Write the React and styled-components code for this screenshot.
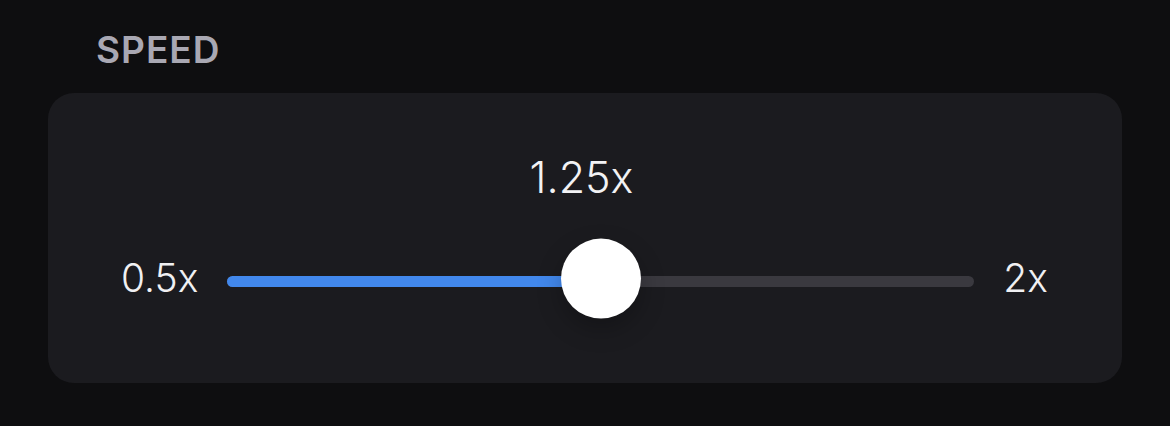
import React from "react";
import styled, { createGlobalStyle } from "styled-components";

const GlobalStyle = createGlobalStyle`
  html, body {
    margin: 0;
    padding: 0;
    background: #0e0e10;
    font-family: "Inter", "Liberation Sans", sans-serif;
  }
`;

const MIN = 0.5;
const MAX = 2;

const SpeedSetting = ({ value }) => {
  const pct = ((value - MIN) / (MAX - MIN)) * 100;
  return (
    <Section>
      <Label>SPEED</Label>
      <Card>
        <Value>{value}x</Value>
        <Row>
          <EndLabel>{MIN}x</EndLabel>
          <Track>
            <Fill style={{ width: `${pct}%` }} />
            <Thumb style={{ left: `${pct}%` }} />
          </Track>
          <EndLabel>{MAX}x</EndLabel>
        </Row>
      </Card>
    </Section>
  );
};

const App = () => (
  <>
    <GlobalStyle />
    <Page>
      <SpeedSetting value={1.25} />
    </Page>
  </>
);

export default App;

const Page = styled.div`
  width: 1170px;
  height: 426px;
  background: #0e0e10;
  padding: 28px 48px 0;
  box-sizing: border-box;
`;

const Section = styled.div`
  display: flex;
  flex-direction: column;
`;

const Label = styled.div`
  margin-left: 48px;
  color: #a9a8b3;
  font-size: 37px;
  font-weight: 600;
  letter-spacing: 1px;
  line-height: 44px;
  height: 44px;
  margin-bottom: 21px;
`;

const Card = styled.div`
  height: 290px;
  background: #1b1b1f;
  border-radius: 26px;
  display: flex;
  flex-direction: column;
  align-items: center;
  padding: 0 74px 0 73px;
  box-sizing: border-box;
`;

const Value = styled.div`
  margin-top: 60px;
  color: #f2f2f4;
  font-size: 43px;
  font-weight: 300;
  line-height: 48px;
  margin-left: -6px;
`;

const Row = styled.div`
  margin-top: 55px;
  width: 100%;
  display: flex;
  align-items: center;
  gap: 29px;
`;

const EndLabel = styled.div`
  color: #f0f0f2;
  font-size: 39px;
  font-weight: 300;
  line-height: 44px;
`;

const Track = styled.div`
  position: relative;
  flex: 1;
  height: 11px;
  border-radius: 6px;
  background: #3a393f;
  margin-top: 6px;
`;

const Fill = styled.div`
  height: 100%;
  border-radius: 6px;
  background: #4288ec;
`;

const Thumb = styled.div`
  position: absolute;
  top: 50%;
  width: 80px;
  height: 80px;
  border-radius: 50%;
  background: #ffffff;
  transform: translate(-50%, -53%);
  box-shadow: 0 10px 24px rgba(0, 0, 0, 0.25);
`;
